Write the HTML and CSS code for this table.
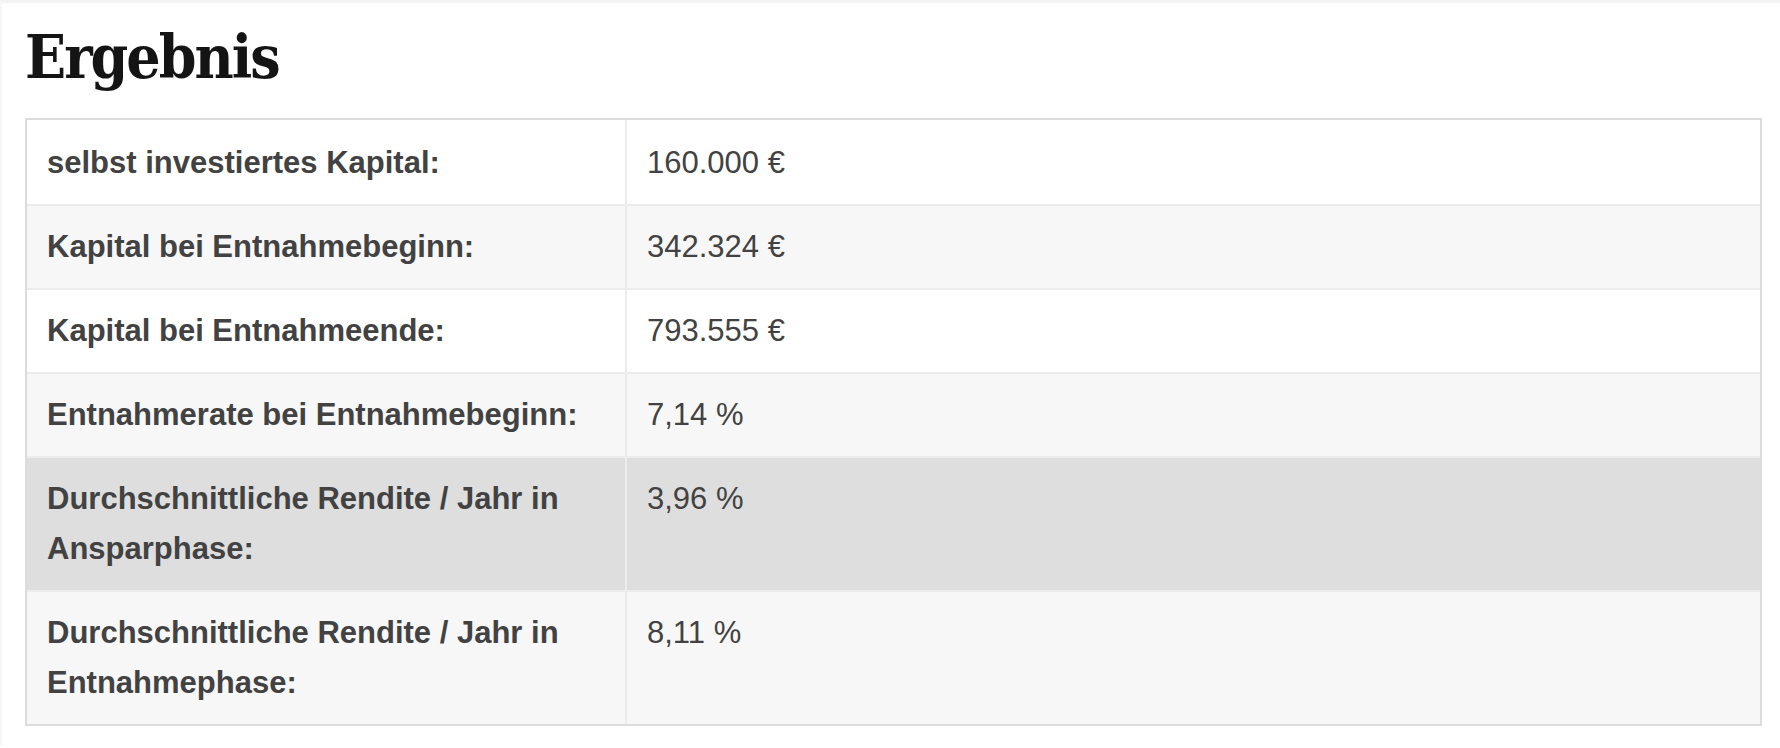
FILE: index.html
```html
<!DOCTYPE html>
<html lang="de">
<head>
<meta charset="utf-8">
<title>Ergebnis</title>
<link rel="stylesheet" href="styles.css">
</head>
<body>
<div class="page">
  <h2 class="title">Ergebnis</h2>
  <table class="result">
    <tbody>
      <tr class="first">
        <td class="label">selbst investiertes Kapital:</td>
        <td class="value">160.000 €</td>
      </tr>
      <tr class="alt">
        <td class="label">Kapital bei Entnahmebeginn:</td>
        <td class="value">342.324 €</td>
      </tr>
      <tr>
        <td class="label">Kapital bei Entnahmeende:</td>
        <td class="value">793.555 €</td>
      </tr>
      <tr class="alt">
        <td class="label">Entnahmerate bei Entnahmebeginn:</td>
        <td class="value">7,14 %</td>
      </tr>
      <tr class="hover">
        <td class="label">Durchschnittliche Rendite / Jahr in Ansparphase:</td>
        <td class="value">3,96 %</td>
      </tr>
      <tr class="alt last">
        <td class="label">Durchschnittliche Rendite / Jahr in Entnahmephase:</td>
        <td class="value">8,11 %</td>
      </tr>
    </tbody>
  </table>
</div>
</body>
</html>
```

FILE: styles.css
```css
html, body {
  margin: 0;
  padding: 0;
  background: #ffffff;
}

.page {
  border-top: 3px solid #f3f3f3;
  border-left: 2px solid #f7f7f7;
  padding: 0 18px 0 23px;
  height: 745px;
  box-sizing: border-box;
}

.title {
  margin: 18px 0 25px 0;
  font-family: "DejaVu Serif Condensed", "DejaVu Serif", serif;
  font-stretch: condensed;
  font-weight: bold;
  font-size: 60px;
  line-height: 72px;
  letter-spacing: -2px;
  color: #141414;
}

.result {
  width: 100%;
  border-collapse: separate;
  border-spacing: 0;
  border: 2px solid #dcdcdc;
  font-family: "Liberation Sans", Arial, sans-serif;
  font-size: 31px;
  line-height: 50px;
  color: #424242;
}

.result td {
  padding: 16px 20px;
  vertical-align: top;
  text-align: left;
  border-bottom: 2px solid #ececec;
}

.result tr.first td {
  padding-top: 18px;
}

.result tr.last td {
  border-bottom: none;
}

.result td.label {
  width: 558px;
  font-weight: bold;
  border-right: 2px solid #ececec;
}

.result tr.alt td {
  background: #f7f7f7;
}

.result tr.hover td {
  background: #dedede;
}
```
